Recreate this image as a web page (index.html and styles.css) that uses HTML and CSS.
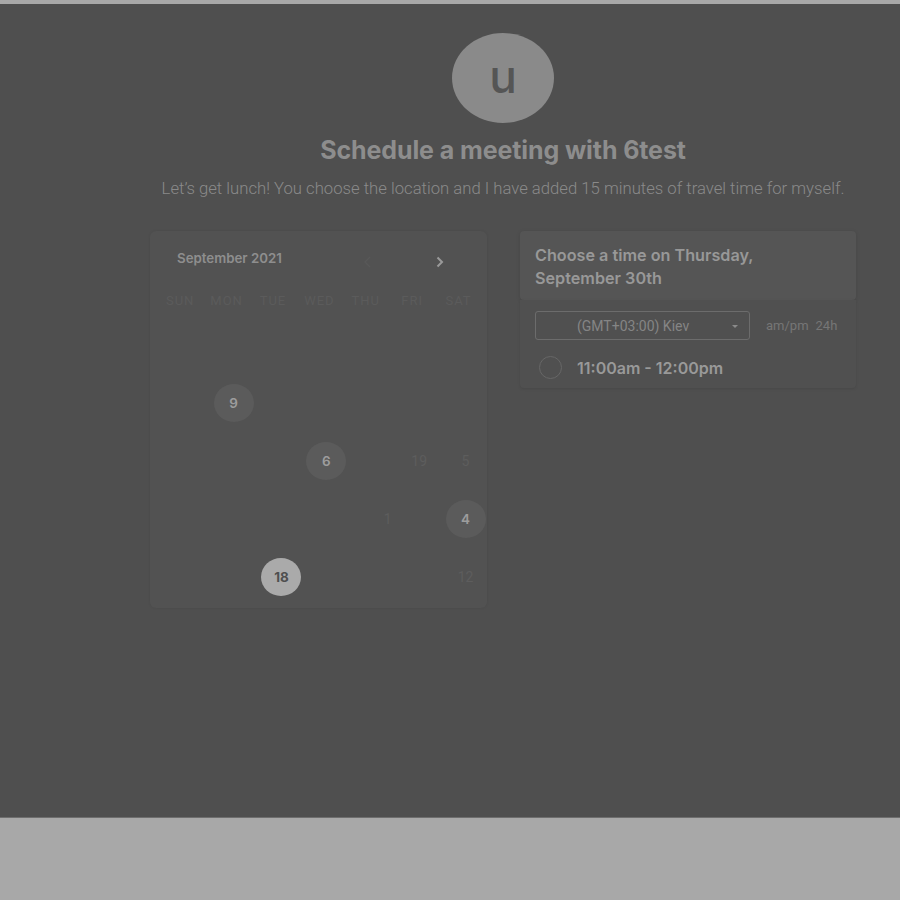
FILE: index.html
```html
<!DOCTYPE html>
<html lang="en">
<head>
<meta charset="utf-8">
<title>Schedule a meeting</title>
<link rel="stylesheet" href="styles.css">
</head>
<body>
<div class="top-strip"></div>
<main class="overlay">
  <div class="container">
    <div class="avatar"><span>u</span></div>
    <h1 class="title">Schedule a meeting with 6test</h1>
    <p class="desc">Let’s get lunch! You choose the location and I have added 15 minutes of travel time for myself.</p>
    <div class="panels">
      <section class="calendar">
        <div class="cal-head">
          <span class="month">September 2021</span>
          <span class="nav prev"><svg width="10" height="12" viewBox="0 0 10 12"><path d="M7 1 L2 6 L7 11" fill="none" stroke="#585858" stroke-width="1.4"/></svg></span>
          <span class="nav next"><svg width="10" height="12" viewBox="0 0 10 12"><path d="M2.5 1.5 L7 6 L2.5 10.5" fill="none" stroke="#9a9a9a" stroke-width="2"/></svg></span>
        </div>
        <div class="weekdays">
          <span>SUN</span><span>MON</span><span>TUE</span><span>WED</span><span>THU</span><span>FRI</span><span>SAT</span>
        </div>
        <div class="days">
          <span></span><span></span><span></span><span></span><span></span><span></span><span></span>
          <span></span><span class="d avail">9</span><span></span><span></span><span></span><span></span><span></span>
          <span></span><span></span><span></span><span class="d avail">6</span><span></span><span class="d faint">19</span><span class="d faint">5</span>
          <span></span><span></span><span></span><span></span><span class="d faint half">1</span><span></span><span class="d avail">4</span>
          <span></span><span></span><span class="d selected">18</span><span></span><span></span><span></span><span class="d faint">12</span>
        </div>
      </section>
      <section class="times">
        <div class="times-head">Choose a time on Thursday, September 30th</div>
        <div class="times-body">
          <div class="tz-row">
            <div class="select"><span>(GMT+03:00) Kiev</span><span class="caret"></span></div>
            <div class="fmt"><span>am/pm</span><span>24h</span></div>
          </div>
          <div class="slot"><span class="radio"></span><span class="slot-text">11:00am - 12:00pm</span></div>
        </div>
      </section>
    </div>
  </div>
</main>
</body>
</html>
```
FILE: styles.css
```css
html, body {
  margin: 0;
  padding: 0;
}
body {
  background: #a8a8a8;
  width: 900px;
  height: 900px;
  overflow: hidden;
  font-family: "Roboto", "Liberation Sans", sans-serif;
}
.top-strip {
  height: 4px;
  background: #a8a8a8;
}
.overlay {
  height: 813px;
  background: #4f4f4f;
  border-bottom: 1px solid #6e6e6e;
}
.container {
  width: 706px;
  margin-left: 150px;
  padding-top: 29px;
  display: flex;
  flex-direction: column;
  align-items: center;
}
.avatar {
  width: 102px;
  height: 90px;
  border-radius: 50%;
  background: #8a8a8a;
  display: flex;
  align-items: center;
  justify-content: center;
}
.avatar span {
  font-family: "Inter", "Roboto", sans-serif;
  font-size: 46px;
  color: #555555;
  font-weight: 500;
  line-height: 1;
  margin-top: -5px;
}
.title {
  margin: 12px 0 0;
  font-family: "Inter", "Roboto", sans-serif;
  font-size: 25px;
  font-weight: 700;
  color: #8d8d8d;
  line-height: 30px;
  letter-spacing: -0.1px;
}
.desc {
  margin: 13px 0 0;
  font-size: 16.7px;
  font-weight: 300;
  color: #8a8a8a;
  line-height: 22px;
  white-space: nowrap;
}
.panels {
  margin-top: 31px;
  width: 706px;
  display: flex;
  gap: 33px;
  align-items: flex-start;
}
.calendar {
  width: 337px;
  height: 377px;
  box-sizing: border-box;
  background: #525252;
  border-radius: 6px;
  box-shadow: 0 0 3px rgba(0,0,0,0.08);
  padding-top: 18px;
}
.cal-head {
  display: flex;
  align-items: center;
  padding-left: 27px;
  height: 18px;
}
.month {
  font-family: "Inter", "Roboto", sans-serif;
  font-size: 13.3px;
  font-weight: 600;
  color: #8e8e8e;
  width: 182px;
}
.nav {
  display: flex;
  align-items: center;
  margin-top: 8px;
}
.prev { width: 72px; margin-left: 4px; }
.weekdays {
  display: grid;
  grid-template-columns: repeat(7, 46.4px);
  padding-left: 7px;
  margin-top: 26px;
}
.weekdays span {
  text-align: center;
  font-size: 13px;
  color: #5b5b5b;
  letter-spacing: 1px;
  line-height: 16px;
}
.days {
  display: grid;
  grid-template-columns: repeat(7, 46.4px);
  grid-auto-rows: 58px;
  padding-left: 14px;
  margin-top: 7px;
}
.days span {
  display: flex;
  align-items: center;
  justify-content: center;
}
.d {
  font-family: "Inter", "Roboto", sans-serif;
  font-size: 13.5px;
  font-weight: 600;
}
.avail, .selected {
  justify-self: center;
  align-self: center;
  width: 40px;
  height: 38px;
  border-radius: 50%;
}
.avail {
  background: #5b5b5b;
  color: #9d9d9d;
}
.selected {
  background: #aaaaaa;
  color: #4f4f4f;
  font-weight: 700;
  margin-left: 3px;
}
.faint {
  color: #5d5d5d;
  font-weight: 400;
  font-family: "Roboto", sans-serif;
  font-size: 14px;
}
.half {
  margin-left: 30px;
}
.times {
  width: 336px;
}
.times-head {
  background: #555555;
  border-radius: 4px;
  box-shadow: 0 1px 4px rgba(0,0,0,0.12);
  padding: 13px 40px 11px 15px;
  font-family: "Inter", "Roboto", sans-serif;
  font-size: 16.2px;
  font-weight: 600;
  color: #989898;
  line-height: 22.5px;
}
.times-body {
  background: #505050;
  border-radius: 0 0 4px 4px;
  box-shadow: 0 1px 3px rgba(0,0,0,0.1);
  padding: 11px 15px 1px;
}
.tz-row {
  display: flex;
  align-items: center;
}
.select {
  width: 215px;
  height: 29px;
  box-sizing: border-box;
  border: 1px solid #6c6c6c;
  border-radius: 3px;
  display: flex;
  align-items: center;
  padding-left: 41px;
  position: relative;
  font-size: 14px;
  color: #858585;
}
.caret {
  position: absolute;
  right: 11px;
  top: 13px;
  width: 0;
  height: 0;
  border-left: 3px solid transparent;
  border-right: 3px solid transparent;
  border-top: 3px solid #8a8a8a;
}
.fmt {
  margin-left: 16px;
  display: flex;
  gap: 7px;
  font-size: 13px;
  color: #767676;
}
.slot {
  display: flex;
  align-items: center;
  height: 39px;
  margin-top: 8px;
}
.radio {
  width: 21px;
  height: 21px;
  border: 1px solid #676767;
  border-radius: 50%;
  margin-left: 4px;
}
.slot-text {
  margin-left: 15px;
  font-family: "Inter", "Roboto", sans-serif;
  font-size: 16px;
  font-weight: 600;
  color: #999999;
}
```
